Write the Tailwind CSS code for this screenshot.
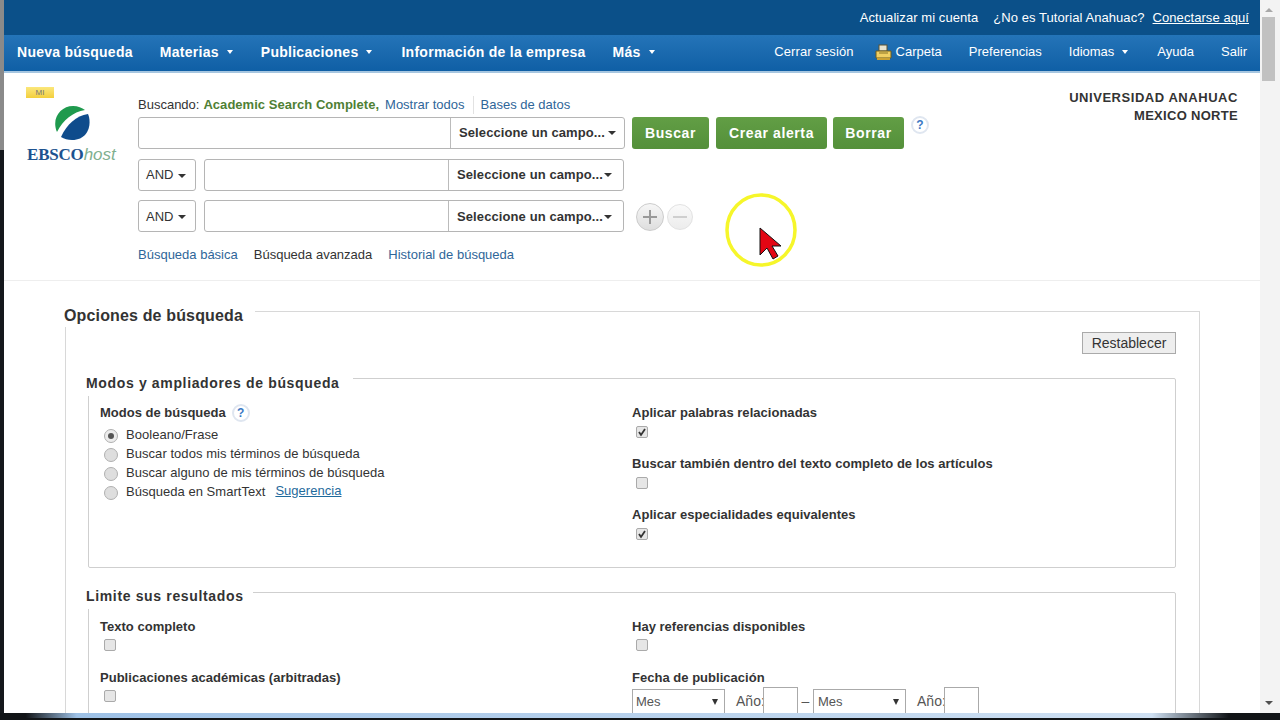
<!DOCTYPE html>
<html lang="es">
<head>
  <meta charset="UTF-8" />
  <title>Búsqueda avanzada – EBSCOhost</title>
  <script src="https://cdn.jsdelivr.net/npm/@tailwindcss/browser@4"></script>
</head>
<body class="m-0 overflow-hidden bg-[#111417] font-['Liberation_Sans',Arial,sans-serif] text-[13px] text-[#333]">
  <div class="relative h-[720px] w-[1280px] overflow-hidden">
    <div class="flex h-[713px]">
      <!-- desktop behind the window -->
      <div class="flex w-[4px] shrink-0 flex-col">
        <div class="h-[150px] bg-[#8a8a8a]"></div>
        <div class="flex-1 bg-[#15181c]"></div>
      </div>

      <div class="w-[1256px] shrink-0 overflow-hidden bg-white">
        <!-- top bar -->
        <div class="flex h-[35px] items-center justify-end gap-[15px] bg-[#0b5089] pr-[11px] text-[13px] tracking-[0.07px] text-white">
          <a>Actualizar mi cuenta</a>
          <div class="flex gap-[8px]">
            <span>¿No es Tutorial Anahuac?</span>
            <a class="underline">Conectarse aquí</a>
          </div>
        </div>

        <!-- nav -->
        <div class="flex h-[38px] items-center justify-between border-b-2 border-[#a6c6e0] bg-gradient-to-b from-[#2474b8] to-[#0f5fa5] pr-[13px] pb-[2px] pl-[13px] text-white">
          <div class="flex items-center gap-[27px] text-[14px] font-bold tracking-[0.27px]">
            <a>Nueva búsqueda</a>
            <a class="flex items-center gap-[8px]">Materias <span class="mr-[1px] h-0 w-0 border-x-[3px] border-t-[4px] border-x-transparent border-t-white"></span></a>
            <a class="flex items-center gap-[8px]">Publicaciones <span class="mr-[2px] h-0 w-0 border-x-[3px] border-t-[4px] border-x-transparent border-t-white"></span></a>
            <a>Información de la empresa</a>
            <a class="flex items-center gap-[8px]">Más <span class="h-0 w-0 border-x-[3px] border-t-[4px] border-x-transparent border-t-white"></span></a>
          </div>
          <div class="flex items-center gap-[27px] text-[13px]">
            <a class="mr-[-6px] tracking-[0.1px]">Cerrar sesión</a>
            <a class="flex items-center gap-[4px]">
              <svg width="17" height="17" viewBox="0 0 17 17">
                <rect x="4" y="1" width="8" height="6" fill="#e8e4d0" stroke="#5c5330" stroke-width="1"/>
                <path d="M1 7h15v7H1z" fill="#f0cf63" stroke="#6b5a1e" stroke-width="1"/>
                <path d="M2 14h13v2H2z" fill="#c9a032"/>
                <path d="M4 9h9" stroke="#8a7426" stroke-width="1"/>
              </svg>
              Carpeta
            </a>
            <a>Preferencias</a>
            <a class="flex items-center gap-[8px]">Idiomas <span class="mr-[2px] h-0 w-0 border-x-[3px] border-t-[4px] border-x-transparent border-t-white"></span></a>
            <a>Ayuda</a>
            <a>Salir</a>
          </div>
        </div>

        <!-- search header -->
        <div class="flex h-[208px] border-b border-[#eeeeee]">
          <div class="w-[134px] shrink-0 pt-[14px] pl-[22px]">
            <div class="flex h-[11px] w-[28px] items-center justify-center bg-gradient-to-b from-[#fbe77a] to-[#f3cf3a] text-[8px] text-[#777]">MI</div>
            <svg class="mt-[7px] ml-[28px]" width="36" height="36" viewBox="0 0 36 36">
              <path d="M3 27C-3 13 7 1 19 1c5 0 9 2 12 4C19 7 9 15 3 27z" fill="#1f9a4e"/>
              <path d="M7 32C13 19 22 11 34 9c4 9 1 26-16 26-4 0-8-1-11-3z" fill="#0f4c8c"/>
            </svg>
            <div class="mt-[5px] ml-[1px] flex items-baseline text-[17px] leading-[18px]">
              <span class="font-['Liberation_Serif',serif] font-bold tracking-[-0.2px] text-[#1d5390]">EBSCO</span><span class="font-['Liberation_Sans',sans-serif] italic text-[#7fb08f]">host</span>
            </div>
          </div>

          <div class="w-[800px] shrink-0 pt-[22px]">
            <div class="flex h-[20px] items-center">
              <span>Buscando:</span>
              <span class="ml-[4px] font-bold tracking-[0.03px] text-[#4f7f35]">Academic Search Complete,</span>
              <a class="ml-[6px] text-[#2f6699]">Mostrar todos</a>
              <span class="mr-[7px] ml-[8px] h-[18px] w-px bg-[#e2e2e2]"></span>
              <a class="text-[#2f6699]">Bases de datos</a>
            </div>

            <div class="mt-[2px] flex h-[32px]">
              <div class="flex h-[32px] w-[487px] rounded-[3px] border border-[#b5b5b5]">
                <div class="w-[311px]"></div>
                <div class="flex flex-1 items-center justify-between border-l border-[#bbbbbb] pr-[8px] pl-[8px] font-bold tracking-[0.1px] whitespace-nowrap">Seleccione un campo... <span class="h-0 w-0 border-x-[4px] border-t-[4px] border-x-transparent border-t-[#333]"></span></div>
              </div>
              <a class="ml-[7px] flex w-[77px] items-center justify-center rounded-[3px] bg-gradient-to-b from-[#629e45] to-[#54903a] text-[14px] font-bold tracking-[0.6px] text-white">Buscar</a>
              <a class="ml-[7px] flex w-[111px] items-center justify-center rounded-[3px] bg-gradient-to-b from-[#629e45] to-[#54903a] text-[14px] font-bold tracking-[0.6px] text-white">Crear alerta</a>
              <a class="ml-[6px] flex w-[71px] items-center justify-center rounded-[3px] bg-gradient-to-b from-[#629e45] to-[#54903a] text-[14px] font-bold tracking-[0.6px] text-white">Borrar</a>
              <span class="mt-[-1px] ml-[7px] flex h-[18px] w-[18px] items-center justify-center rounded-full border-2 border-[#dfe6f0] bg-white text-[12px] font-bold text-[#3b78c4]">?</span>
            </div>

            <div class="mt-[10px] flex h-[32px]">
              <div class="flex w-[58px] items-center gap-[5px] rounded-[3px] border border-[#b5b5b5] pl-[7px] text-[13px]">AND <span class="mt-[1px] h-0 w-0 border-x-[4px] border-t-[4px] border-x-transparent border-t-[#333]"></span></div>
              <div class="ml-[8px] flex w-[420px] rounded-[3px] border border-[#b5b5b5]">
                <div class="w-[243px]"></div>
                <div class="flex flex-1 items-center justify-between border-l border-[#bbbbbb] pr-[11px] pl-[8px] font-bold tracking-[0.1px] whitespace-nowrap">Seleccione un campo... <span class="h-0 w-0 border-x-[4px] border-t-[4px] border-x-transparent border-t-[#333]"></span></div>
              </div>
            </div>

            <div class="mt-[9px] flex h-[32px] items-center">
              <div class="flex h-[32px] w-[58px] items-center gap-[5px] rounded-[3px] border border-[#b5b5b5] pt-[1px] pl-[7px] text-[13px]">AND <span class="mt-[1px] h-0 w-0 border-x-[4px] border-t-[4px] border-x-transparent border-t-[#333]"></span></div>
              <div class="ml-[8px] flex h-[32px] w-[420px] rounded-[3px] border border-[#b5b5b5]">
                <div class="w-[243px]"></div>
                <div class="flex flex-1 items-center justify-between border-l border-[#bbbbbb] pt-[1px] pr-[11px] pl-[8px] font-bold tracking-[0.1px] whitespace-nowrap">Seleccione un campo... <span class="h-0 w-0 border-x-[4px] border-t-[4px] border-x-transparent border-t-[#333]"></span></div>
              </div>
              <span class="mt-[1px] ml-[12px] flex h-[28px] w-[28px] items-center justify-center rounded-full border border-[#cccccc] bg-gradient-to-b from-[#f6f6f6] to-[#dedede]">
                <svg width="14" height="14" viewBox="0 0 14 14"><path d="M7 0v14M0 7h14" stroke="#999999" stroke-width="2"/></svg>
              </span>
              <span class="mt-[1px] ml-[3px] flex h-[26px] w-[26px] items-center justify-center rounded-full border border-[#e2e2e2] bg-gradient-to-b from-[#fafafa] to-[#ececec]">
                <svg width="14" height="2" viewBox="0 0 14 2"><path d="M0 1h14" stroke="#cfcfcf" stroke-width="2"/></svg>
              </span>
            </div>

            <div class="mt-[13px] flex h-[20px] items-center gap-[16px]">
              <a class="text-[#2f6699]">Búsqueda básica</a>
              <span>Búsqueda avanzada</span>
              <a class="text-[#2f6699]">Historial de búsqueda</a>
            </div>
          </div>

          <div class="flex-1 pt-[16px] pr-[22px] text-right text-[13px] leading-[18px] font-bold tracking-[0.55px]">
            UNIVERSIDAD ANAHUAC<br /><span class="tracking-[0.3px]">MEXICO NORTE</span>
          </div>
        </div>

        <!-- search options -->
        <div class="relative mt-[30px] ml-[61px] w-[1135px] border border-[#d8d8d8] pt-[20px] pr-[23px] pl-[22px]">
          <h2 class="absolute top-[-7px] left-[-2px] h-[22px] w-[191px] bg-white text-[16px] leading-[22px] font-bold tracking-[0.15px]">Opciones de búsqueda</h2>

          <div class="flex justify-end">
            <button class="h-[22px] w-[94px] border border-[#aaaaaa] bg-[#eeeeee] text-[14px] text-[#333]">Restablecer</button>
          </div>

          <div class="relative mt-[24px] h-[190px] rounded-[2px] border border-[#cfcfcf] pt-[24px] pl-[11px]">
            <h3 class="absolute top-[-5px] left-[-3px] h-[22px] w-[267px] bg-white text-[14px] leading-[18px] font-bold tracking-[0.65px]">Modos y ampliadores de búsqueda</h3>
            <div class="grid grid-cols-[532px_1fr]">
              <div>
                <div class="mt-[1px] flex h-[18px] items-center gap-[6px] font-bold">
                  Modos de búsqueda
                  <span class="flex h-[18px] w-[18px] items-center justify-center rounded-full border-2 border-[#dfe6f0] text-[12px] text-[#3b78c4]">?</span>
                </div>
                <div class="mt-[3px] flex h-[19px] items-center gap-[8px] pl-[4px] tracking-[0.03px]">
                  <span class="mt-[3px] flex h-[14px] w-[14px] items-center justify-center rounded-full border border-[#b0b0b0] bg-[#ececec]"><span class="h-[6px] w-[6px] rounded-full bg-[#555]"></span></span>
                  Booleano/Frase
                </div>
                <div class="flex h-[19px] items-center gap-[8px] pl-[4px] tracking-[0.05px]">
                  <span class="mt-[3px] h-[14px] w-[14px] rounded-full border border-[#b0b0b0] bg-[#dedede]"></span>
                  Buscar todos mis términos de búsqueda
                </div>
                <div class="flex h-[19px] items-center gap-[8px] pl-[4px] tracking-[0.03px]">
                  <span class="mt-[3px] h-[14px] w-[14px] rounded-full border border-[#b0b0b0] bg-[#dedede]"></span>
                  Buscar alguno de mis términos de búsqueda
                </div>
                <div class="flex h-[19px] items-center gap-[8px] pl-[4px] tracking-[0.03px]">
                  <span class="mt-[3px] h-[14px] w-[14px] rounded-full border border-[#b0b0b0] bg-[#dedede]"></span>
                  Búsqueda en SmartText
                  <a class="mb-[2px] ml-[2px] text-[#1f6a9c] underline">Sugerencia</a>
                </div>
              </div>
              <div class="tracking-[0.03px]">
                <div class="h-[51px]">
                  <div class="h-[18px] leading-[20px] font-bold">Aplicar palabras relacionadas</div>
                  <span class="mt-[5px] ml-[4px] flex h-[12px] w-[12px] items-center justify-center rounded-[2px] border border-[#aaaaaa] bg-[#e6e6e6]">
                    <svg width="10" height="10" viewBox="0 0 10 10"><path d="M2 5l2 3 4-6" fill="none" stroke="#333" stroke-width="1.8"/></svg>
                  </span>
                </div>
                <div class="h-[51px]">
                  <div class="h-[18px] leading-[20px] font-bold">Buscar también dentro del texto completo de los artículos</div>
                  <span class="mt-[5px] ml-[4px] block h-[12px] w-[12px] rounded-[2px] border border-[#aaaaaa] bg-[#e6e6e6]"></span>
                </div>
                <div class="h-[51px]">
                  <div class="h-[18px] leading-[20px] font-bold">Aplicar especialidades equivalentes</div>
                  <span class="mt-[5px] ml-[4px] flex h-[12px] w-[12px] items-center justify-center rounded-[2px] border border-[#aaaaaa] bg-[#e6e6e6]">
                    <svg width="10" height="10" viewBox="0 0 10 10"><path d="M2 5l2 3 4-6" fill="none" stroke="#333" stroke-width="1.8"/></svg>
                  </span>
                </div>
              </div>
            </div>
          </div>

          <div class="relative mt-[24px] h-[190px] rounded-[2px] border border-[#cfcfcf] pt-[24px] pl-[11px]">
            <h3 class="absolute top-[-6px] left-[-3px] h-[22px] w-[167px] bg-white text-[14px] leading-[18px] font-bold tracking-[0.65px]">Limite sus resultados</h3>
            <div class="grid grid-cols-[532px_1fr] tracking-[0.02px]">
              <div>
                <div class="h-[51px]">
                  <div class="h-[18px] leading-[20px] font-bold">Texto completo</div>
                  <span class="mt-[4px] ml-[4px] block h-[12px] w-[12px] rounded-[2px] border border-[#aaaaaa] bg-[#e6e6e6]"></span>
                </div>
                <div class="h-[51px]">
                  <div class="h-[18px] leading-[20px] font-bold">Publicaciones académicas (arbitradas)</div>
                  <span class="mt-[4px] ml-[4px] block h-[12px] w-[12px] rounded-[2px] border border-[#aaaaaa] bg-[#e6e6e6]"></span>
                </div>
              </div>
              <div>
                <div class="h-[51px]">
                  <div class="h-[18px] leading-[20px] font-bold">Hay referencias disponibles</div>
                  <span class="mt-[4px] ml-[4px] block h-[12px] w-[12px] rounded-[2px] border border-[#aaaaaa] bg-[#e6e6e6]"></span>
                </div>
                <div class="h-[18px] leading-[20px] font-bold">Fecha de publicación</div>
                <div class="mt-[1px] flex items-start text-[14px] leading-[18px] text-[#555]">
                  <div class="mt-[2px] flex h-[30px] w-[93px] justify-between border border-[#aaaaaa] pt-[3px] pr-[6px] pl-[3px] text-[13px]">Mes <span class="mt-[6px] h-0 w-0 border-x-[3px] border-t-[6px] border-x-transparent border-t-[#333]"></span></div>
                  <span class="mt-[5px] ml-[11px] w-[27px]">Año:</span>
                  <div class="h-[32px] w-[35px] border border-[#aaaaaa]"></div>
                  <span class="mt-[5px] w-[15px] text-center">–</span>
                  <div class="mt-[2px] flex h-[30px] w-[93px] justify-between border border-[#aaaaaa] pt-[3px] pr-[6px] pl-[4px] text-[13px]">Mes <span class="mt-[6px] h-0 w-0 border-x-[3px] border-t-[6px] border-x-transparent border-t-[#333]"></span></div>
                  <span class="mt-[5px] ml-[11px] w-[27px]">Año:</span>
                  <div class="h-[32px] w-[35px] border border-[#aaaaaa]"></div>
                </div>
              </div>
            </div>
          </div>
        </div>
      </div>

      <!-- scrollbar -->
      <div class="flex w-[20px] shrink-0 flex-col bg-[#f3f3f3] pr-[5px] pl-[2px]">
        <div class="flex h-[19px] shrink-0 items-center justify-center"><span class="h-0 w-0 border-x-[4px] border-b-[4px] border-x-transparent border-b-[#a8a8a8]"></span></div>
        <div class="mt-[-2px] h-[64px] shrink-0 bg-[#c1c1c1]"></div>
        <div class="flex-1"></div>
        <div class="flex h-[20px] shrink-0 items-center justify-center"><span class="h-0 w-0 border-x-[4px] border-t-[4px] border-x-transparent border-t-[#505050]"></span></div>
      </div>
    </div>

    <!-- window bottom edge -->
    <div class="h-[5px] bg-[linear-gradient(to_right,#111417_2%,#9ec1e6_6%,#cfe0f2_90%,#111417_96%)]"></div>

    <!-- recorded mouse pointer -->
    <svg class="absolute top-[193px] left-[724px]" width="76" height="76" viewBox="0 0 76 76">
      <ellipse cx="37" cy="37" rx="34" ry="35" fill="none" stroke="#f6f62a" stroke-width="3.5"/>
      <path d="M36 35v27l7-7 6 11 5-3-6-10h9z" fill="#e30613" stroke="#111" stroke-width="1"/>
    </svg>
  </div>
</body>
</html>
